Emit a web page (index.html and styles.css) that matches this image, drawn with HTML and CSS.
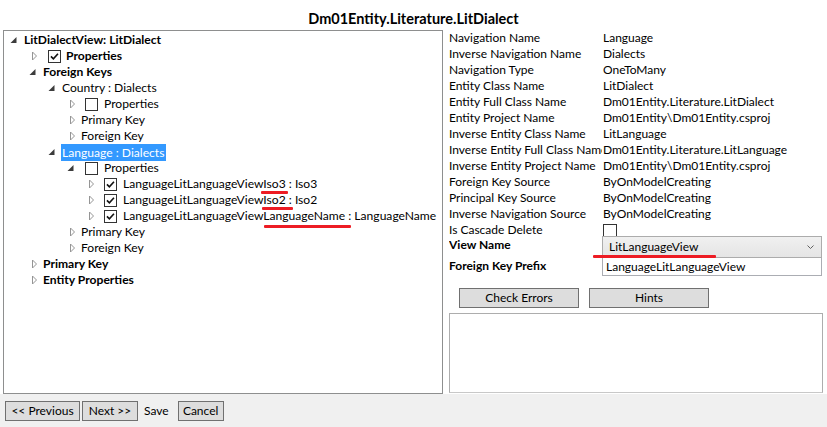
FILE: index.html
```html
<!DOCTYPE html>
<html>
<head>
<meta charset="utf-8">
<link rel="stylesheet" href="styles.css">
</head>
<body>
<div class="window">
  <div class="title">Dm01Entity.Literature.LitDialect</div>
  <div class="main">
    <div class="tree">
      <div class="row l0 bold"><svg class="exp" viewBox="0 0 19 16"><path d="M12.5 5 L12.5 11 L6.5 11 Z" class="open"/></svg><span class="hdr">LitDialectView: LitDialect</span></div>
      <div class="row l1 bold"><svg class="exp" viewBox="0 0 19 16"><path d="M9.5 4 L13.5 8 L9.5 12 Z" class="closed"/></svg><span class="cb checked"><svg viewBox="0 0 13 13"><path d="M2.3 6.3 L5.2 9.3 L10.6 3.3"/></svg></span><span class="hdr">Properties</span></div>
      <div class="row l1 bold"><svg class="exp" viewBox="0 0 19 16"><path d="M12.5 5 L12.5 11 L6.5 11 Z" class="open"/></svg><span class="hdr">Foreign Keys</span></div>
      <div class="row l2"><svg class="exp" viewBox="0 0 19 16"><path d="M12.5 5 L12.5 11 L6.5 11 Z" class="open"/></svg><span class="hdr">Country : Dialects</span></div>
      <div class="row l3"><svg class="exp" viewBox="0 0 19 16"><path d="M9.5 4 L13.5 8 L9.5 12 Z" class="closed"/></svg><span class="cb"></span><span class="hdr">Properties</span></div>
      <div class="row l3"><svg class="exp" viewBox="0 0 19 16"><path d="M9.5 4 L13.5 8 L9.5 12 Z" class="closed"/></svg><span class="hdr">Primary Key</span></div>
      <div class="row l3"><svg class="exp" viewBox="0 0 19 16"><path d="M9.5 4 L13.5 8 L9.5 12 Z" class="closed"/></svg><span class="hdr">Foreign Key</span></div>
      <div class="row l2"><svg class="exp" viewBox="0 0 19 16"><path d="M12.5 5 L12.5 11 L6.5 11 Z" class="open"/></svg><span class="hdr selected">Language : Dialects</span></div>
      <div class="row l3"><svg class="exp" viewBox="0 0 19 16"><path d="M12.5 5 L12.5 11 L6.5 11 Z" class="open"/></svg><span class="cb"></span><span class="hdr">Properties</span></div>
      <div class="row l4"><svg class="exp" viewBox="0 0 19 16"><path d="M9.5 4 L13.5 8 L9.5 12 Z" class="closed"/></svg><span class="cb checked"><svg viewBox="0 0 13 13"><path d="M2.3 6.3 L5.2 9.3 L10.6 3.3"/></svg></span><span class="hdr">LanguageLitLanguageViewIso3 : Iso3</span></div>
      <div class="row l4"><svg class="exp" viewBox="0 0 19 16"><path d="M9.5 4 L13.5 8 L9.5 12 Z" class="closed"/></svg><span class="cb checked"><svg viewBox="0 0 13 13"><path d="M2.3 6.3 L5.2 9.3 L10.6 3.3"/></svg></span><span class="hdr">LanguageLitLanguageViewIso2 : Iso2</span></div>
      <div class="row l4"><svg class="exp" viewBox="0 0 19 16"><path d="M9.5 4 L13.5 8 L9.5 12 Z" class="closed"/></svg><span class="cb checked"><svg viewBox="0 0 13 13"><path d="M2.3 6.3 L5.2 9.3 L10.6 3.3"/></svg></span><span class="hdr">LanguageLitLanguageViewLanguageName : LanguageName</span></div>
      <div class="row l3"><svg class="exp" viewBox="0 0 19 16"><path d="M9.5 4 L13.5 8 L9.5 12 Z" class="closed"/></svg><span class="hdr">Primary Key</span></div>
      <div class="row l3"><svg class="exp" viewBox="0 0 19 16"><path d="M9.5 4 L13.5 8 L9.5 12 Z" class="closed"/></svg><span class="hdr">Foreign Key</span></div>
      <div class="row l1 bold"><svg class="exp" viewBox="0 0 19 16"><path d="M9.5 4 L13.5 8 L9.5 12 Z" class="closed"/></svg><span class="hdr">Primary Key</span></div>
      <div class="row l1 bold"><svg class="exp" viewBox="0 0 19 16"><path d="M9.5 4 L13.5 8 L9.5 12 Z" class="closed"/></svg><span class="hdr">Entity Properties</span></div>
    </div>
    <div class="panel">
      <div class="props">
        <div class="lbl">Navigation Name</div><div class="val">Language</div>
        <div class="lbl">Inverse Navigation Name</div><div class="val">Dialects</div>
        <div class="lbl">Navigation Type</div><div class="val">OneToMany</div>
        <div class="lbl">Entity Class Name</div><div class="val">LitDialect</div>
        <div class="lbl">Entity Full Class Name</div><div class="val">Dm01Entity.Literature.LitDialect</div>
        <div class="lbl">Entity Project Name</div><div class="val">Dm01Entity\Dm01Entity.csproj</div>
        <div class="lbl">Inverse Entity Class Name</div><div class="val">LitLanguage</div>
        <div class="lbl">Inverse Entity Full Class Name</div><div class="val">Dm01Entity.Literature.LitLanguage</div>
        <div class="lbl">Inverse Entity Project Name</div><div class="val">Dm01Entity\Dm01Entity.csproj</div>
        <div class="lbl">Foreign Key Source</div><div class="val">ByOnModelCreating</div>
        <div class="lbl">Principal Key Source</div><div class="val">ByOnModelCreating</div>
        <div class="lbl">Inverse Navigation Source</div><div class="val">ByOnModelCreating</div>
        <div class="lbl">Is Cascade Delete</div><div class="valcb"><span class="cb"></span></div>
      </div>
      <div class="edits">
        <div class="lbl bold top">View Name</div>
        <div class="combo"><span>LitLanguageView</span><svg class="chev" viewBox="0 0 7 4"><path d="M0.5 0.5 L3.5 3.5 L6.5 0.5"/></svg></div>
        <div class="lbl bold">Foreign Key Prefix</div>
        <div class="textbox">LanguageLitLanguageView</div>
      </div>
      <div class="actions">
        <button class="btn wide">Check Errors</button>
        <button class="btn wide">Hints</button>
      </div>
      <div class="output"></div>
    </div>
  </div>
</div>
<div class="footer">
  <button class="btn prev">&lt;&lt; Previous</button>
  <button class="btn next">Next &gt;&gt;</button>
  <button class="btn flat">Save</button>
  <button class="btn cancel">Cancel</button>
</div>

<div class="mark m1"></div>
<div class="mark m2"></div>
<div class="mark m3"></div>
<div class="mark m4"></div>
</body>
</html>
```
FILE: styles.css
```css
html, body {
  margin: 0;
  padding: 0;
}
body {
  width: 827px;
  height: 427px;
  overflow: hidden;
  font-family: Lato, "Open Sans", sans-serif;
  font-size: 12px;
  color: #000;
  background: #f0f0f0;
}
.window {
  background: #fff;
  height: 394px;
  display: flex;
  flex-direction: column;
}
.title {
  height: 29px;
  box-sizing: border-box;
  padding-top: 9px;
  line-height: 20px;
  font-weight: bold;
  font-size: 14.5px;
  text-align: center;
}
.main {
  display: flex;
  flex: 1;
}
.tree {
  margin: 1px 0 0 3px;
  width: 440px;
  height: 364px;
  box-sizing: border-box;
  border: 1px solid #8e8f8f;
  padding: 1px 0 0 0;
  overflow: hidden;
  font-size: 12.1px;
}
.row {
  display: flex;
  align-items: center;
  height: 16px;
  line-height: 16px;
  white-space: nowrap;
}
.row.bold, .bold { font-weight: bold; }
.l1 { padding-left: 19px; }
.l2 { padding-left: 38px; }
.l3 { padding-left: 57px; }
.l4 { padding-left: 76px; }
.exp {
  width: 19px;
  height: 16px;
  flex: none;
}
.exp .open { fill: #3c3c3c; stroke: none; }
.exp .closed { fill: #fff; stroke: #959595; stroke-width: 1; stroke-linejoin: miter; }
.hdr {
  padding: 0 1px;
  line-height: 16px;
}
.hdr.selected {
  background: #3399ff;
  color: #fff;
  line-height: 17px;
  padding: 0 2px 0 1px;
}
.cb {
  width: 13px;
  height: 13px;
  box-sizing: border-box;
  border: 1px solid #333;
  background: #fff;
  margin: 0 4px 0 6px;
  flex: none;
  display: flex;
}
.cb svg {
  width: 11px;
  height: 11px;
}
.cb.checked svg path {
  fill: none;
  stroke: #111;
  stroke-width: 1.9;
}
.l3 .cb, .l4 .cb { margin-left: 5px; margin-right: 5px; }

.panel {
  margin-left: 6px;
  width: 374px;
  display: flex;
  flex-direction: column;
}
.props {
  display: grid;
  grid-template-columns: 153px 221px;
  grid-auto-rows: 16px;
  line-height: 16px;
  padding-top: 1px;
}
.lbl {
  white-space: nowrap;
  overflow: hidden;
}
.val {
  padding-left: 1px;
  white-space: nowrap;
}
.valcb {
  display: flex;
  align-items: center;
}
.valcb .cb {
  margin: 1px 0 0 1px;
  width: 14px;
  height: 13px;
}
.edits {
  display: grid;
  grid-template-columns: 153px 220px;
  grid-template-rows: 22px 18px;
  margin-top: -2px;
  line-height: 16px;
}
.lbl.top { padding-top: 1px; }
.combo {
  box-sizing: border-box;
  border: 1px solid #acacac;
  background: linear-gradient(#f0f0f0, #e5e5e5);
  display: flex;
  align-items: center;
  justify-content: space-between;
  padding: 0 6px 0 6px;
}
.chev {
  width: 7px;
  height: 4px;
  margin-right: 1px;
}
.chev path { fill: none; stroke: #606060; stroke-width: 1; }
.textbox {
  box-sizing: border-box;
  border: 1px solid #abadb3;
  border-top: none;
  padding: 0 3px;
  line-height: 17px;
}
.actions {
  display: flex;
  gap: 10px;
  padding-left: 10px;
  margin-top: 12px;
}
.btn {
  font-family: inherit;
  font-size: 12px;
  color: #000;
  background: #dddddd;
  border: 1px solid #707070;
  margin: 0;
  padding: 0;
  height: 20px;
  line-height: 18px;
  box-sizing: border-box;
}
.btn.wide { width: 120px; }
.output {
  margin-top: 5px;
  height: 80px;
  box-sizing: border-box;
  border: 1px solid #adadad;
  border-bottom-color: #c8c8c8;
}
.footer {
  height: 33px;
  box-sizing: border-box;
  padding: 7px 0 0 5px;
  display: flex;
  align-items: flex-start;
}
.footer .btn { height: 20px; }
.prev { width: 75px; }
.next { width: 56px; margin-left: 2px; }
.flat {
  background: transparent;
  border-color: transparent;
  margin-left: 2px;
  padding: 0 3px;
}
.cancel { width: 46px; margin-left: 5px; }

.mark {
  position: absolute;
  background: #ed1c24;
  height: 3px;
  border-radius: 1px;
}
.m1 { left: 261px; top: 191px; width: 27px; }
.m2 { left: 262px; top: 207px; width: 31px; }
.m3 { left: 264px; top: 225px; width: 87px; }
.m4 { left: 593px; top: 255px; width: 123px; height: 3px; }
```
